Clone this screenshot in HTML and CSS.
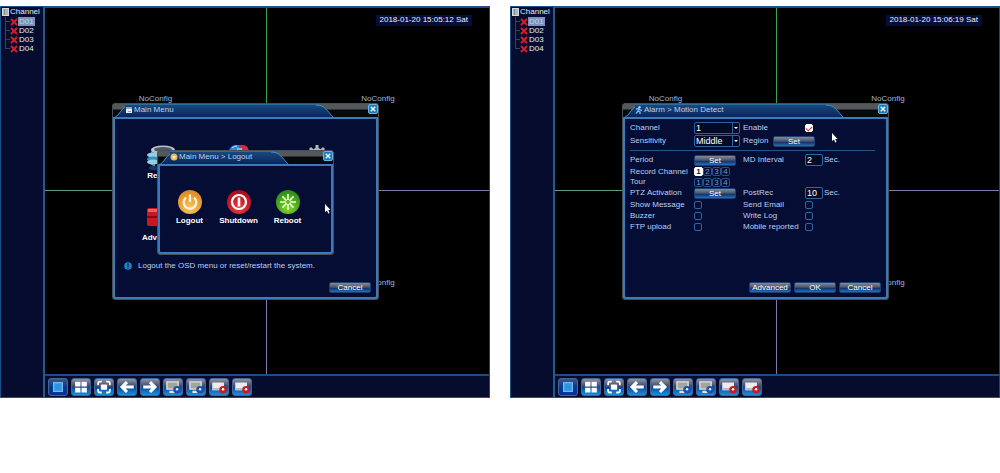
FILE: index.html
```
<!DOCTYPE html>
<html lang="en">
<head>
  <meta charset="UTF-8" />
  <meta name="viewport" content="width=device-width, initial-scale=1.0"/>
  <title>DVR - Motion Detect</title>
  <link rel="stylesheet" href="styles.css">
</head>
<body>

  <!-- shared icons -->
  <svg class="defs" width="0" height="0" aria-hidden="true">
    <defs>
      <linearGradient id="tabFill" x1="0" y1="0" x2="0" y2="1">
        <stop offset="0" stop-color="#174a80"/>
        <stop offset="1" stop-color="#0b2058"/>
      </linearGradient>
      <radialGradient id="gold" cx="50%" cy="75%" r="70%">
        <stop offset="0" stop-color="#f9c65c"/>
        <stop offset="1" stop-color="#dd8c25"/>
      </radialGradient>
      <radialGradient id="ruby" cx="50%" cy="75%" r="70%">
        <stop offset="0" stop-color="#ee3b40"/>
        <stop offset="1" stop-color="#a90c1b"/>
      </radialGradient>
      <radialGradient id="lime" cx="50%" cy="75%" r="70%">
        <stop offset="0" stop-color="#83d62c"/>
        <stop offset="1" stop-color="#2d8c19"/>
      </radialGradient>
    </defs>
    <symbol id="tabLeft" viewBox="0 0 18 14">
      <path d="M0 14C8 12 8 1 18 1V14Z" fill="url(#tabFill)"/>
      <path d="M0 14C8 12 8 1 18 1" fill="none" stroke="#3d93c4"/>
    </symbol>
    <symbol id="tabRight" viewBox="0 0 18 14">
      <path d="M0 1C9 1 10 6 18 14H0Z" fill="url(#tabFill)"/>
      <path d="M0 1C9 1 10 6 18 14" fill="none" stroke="#3d93c4"/>
    </symbol>
    <symbol id="cross" viewBox="0 0 8 8">
      <path d="M1 1L7 7M7 1L1 7" fill="none" stroke="currentColor" stroke-width="1.8"/>
    </symbol>
    <symbol id="list" viewBox="0 0 7 8">
      <path d="M0 0H7V8H0Z" fill="#d5d8dc"/>
      <path d="M1 2H6M1 4H6M1 6H6M2.500 1V7" stroke="#7d8289" stroke-width=".8"/>
    </symbol>
    <symbol id="menu" viewBox="0 0 8 8">
      <path d="M1 1H7V7H1Z" fill="#e6edf2"/>
      <path d="M1 1H7V3H1Z" fill="#8fa8bd"/>
      <path d="M3 5H6V6H3Z" fill="#c39a3d"/>
    </symbol>
    <symbol id="runner" viewBox="0 0 8 8">
      <circle cx="4.500" cy="1.300" r="1.200" fill="#a8d2f5"/>
      <path d="M1 3L4 2.500L5 4L7 4.500M4 3L3 5L5 6L5 8M3 5L1 7.500" fill="none" stroke="#78b4ee" stroke-width="1.300"/>
    </symbol>
    <symbol id="pointer" viewBox="0 0 7 10">
      <path d="M1 0V8L3 6.500L4.200 9.500L5.500 9L4.300 6H6.500Z" fill="#fff"/>
    </symbol>
    <symbol id="single" viewBox="0 0 20 18">
      <rect x="5" y="4" width="10" height="10" fill="#3aa0e8" stroke="#7cc6f5"/>
      <rect x="7" y="6" width="6" height="6" fill="#2d90e0"/>
    </symbol>
    <symbol id="quad" viewBox="0 0 20 18">
      <path d="M3.500 3H9.400V8.400H3.500ZM10.600 3H16.500V8.400H10.600ZM3.500 9.600H9.400V15H3.500ZM10.600 9.600H16.500V15H10.600Z" fill="#fff"/>
    </symbol>
    <symbol id="full" viewBox="0 0 20 18">
      <rect x="6.500" y="6" width="7" height="6" rx="1" fill="#fff"/>
      <path d="M3.500 7V5Q3.500 3 5.500 3H7.500M12.500 3H14.500Q16.500 3 16.500 5V7M16.500 11V13Q16.500 15 14.500 15H12.500M7.500 15H5.500Q3.500 15 3.500 13V11" fill="none" stroke="#fff" stroke-width="2"/>
    </symbol>
    <symbol id="prev" viewBox="0 0 20 18">
      <path d="M17.500 9H5M10 3.500L4.500 9L10 14.500" fill="none" stroke="#fff" stroke-width="3.400"/>
    </symbol>
    <symbol id="next" viewBox="0 0 20 18">
      <path d="M2.500 9H15M10 3.500L15.500 9L10 14.500" fill="none" stroke="#fff" stroke-width="3.400"/>
    </symbol>
    <symbol id="monitor" viewBox="0 0 20 18">
      <path d="M2.500 2.500H16.500V12H2.500ZM6 13H13V15.500H6Z" fill="#e4e4dc"/>
      <path d="M4 4H15V10.500H4Z" fill="#a3a69b"/>
      <circle cx="14.500" cy="12" r="4.200" fill="#1b4fae"/>
      <circle cx="14.500" cy="11.500" r="1.400" fill="#dcecff"/>
    </symbol>
    <symbol id="record" viewBox="0 0 20 18">
      <path d="M2.500 4H15.500V12.500H2.500Z" fill="#ececef"/>
      <path d="M2.500 10H15.500V12.500H2.500Z" fill="#b9bcc8"/>
      <circle cx="14.500" cy="12" r="4.200" fill="#c21d22"/>
      <circle cx="14.500" cy="11.500" r="1.400" fill="#fff"/>
    </symbol>
    <symbol id="power" viewBox="0 0 26 26">
      <circle cx="13" cy="13" r="12" fill="url(#gold)"/>
      <path d="M9 8.500A6.300 6.300 0 1 0 17 8.500M13 5.500V13" fill="none" stroke="#fff6df" stroke-width="2.200"/>
    </symbol>
    <symbol id="shutdown" viewBox="0 0 26 26">
      <circle cx="13" cy="13" r="12" fill="url(#ruby)"/>
      <circle cx="13" cy="13" r="7" fill="none" stroke="#fff" stroke-width="2.200"/>
      <path d="M13 8.500V17.500" stroke="#fff" stroke-width="2.600"/>
    </symbol>
    <symbol id="reboot" viewBox="0 0 26 26">
      <circle cx="13" cy="13" r="12" fill="url(#lime)"/>
      <path d="M13 5V11M13 15V21M5 13H11M15 13H21M7.400 7.400L11.600 11.600M14.400 14.400L18.600 18.600M18.600 7.400L14.400 11.600M11.600 14.400L7.400 18.600" stroke="#eaffcf" stroke-width="1.600"/>
    </symbol>
  </svg>

  <main class="screens">

    <section class="screen">
      <aside class="sidebar">
        <h2 class="sidebar-title"><svg width="7" height="8"><use href="#list"/></svg>Channel</h2>
        <ul class="tree">
          <li class="selected"><svg width="8" height="8"><use href="#cross"/></svg><span>D01</span></li>
          <li><svg width="8" height="8"><use href="#cross"/></svg><span>D02</span></li>
          <li><svg width="8" height="8"><use href="#cross"/></svg><span>D03</span></li>
          <li><svg width="8" height="8"><use href="#cross"/></svg><span>D04</span></li>
        </ul>
      </aside>
      <div class="video">
        <div class="cell">NoConfig</div>
        <div class="cell">NoConfig</div>
        <div class="cell"></div>
        <div class="cell">NoConfig</div>
      </div>
      <nav class="toolbar">
        <button class="tool active" aria-label="Single view"><svg viewBox="0 0 20 18"><use href="#single"/></svg></button>
        <button class="tool" aria-label="Quad view"><svg viewBox="0 0 20 18"><use href="#quad"/></svg></button>
        <button class="tool" aria-label="Full screen"><svg viewBox="0 0 20 18"><use href="#full"/></svg></button>
        <button class="tool" aria-label="Previous"><svg viewBox="0 0 20 18"><use href="#prev"/></svg></button>
        <button class="tool" aria-label="Next"><svg viewBox="0 0 20 18"><use href="#next"/></svg></button>
        <button class="tool" aria-label="Display"><svg viewBox="0 0 20 18"><use href="#monitor"/></svg></button>
        <button class="tool" aria-label="Output"><svg viewBox="0 0 20 18"><use href="#monitor"/></svg></button>
        <button class="tool" aria-label="Record"><svg viewBox="0 0 20 18"><use href="#record"/></svg></button>
        <button class="tool" aria-label="Playback"><svg viewBox="0 0 20 18"><use href="#record"/></svg></button>
      </nav>
      <time class="clock">2018-01-20 15:05:12 Sat</time>

      <div class="dialog dialog-main">
        <header class="titlebar">
          <svg width="18" height="14"><use href="#tabLeft"/></svg>
          <h3 class="tab"><svg width="8" height="8"><use href="#menu"/></svg>Main Menu</h3>
          <svg width="18" height="14"><use href="#tabRight"/></svg>
          <button class="close" aria-label="Close"><svg width="6" height="6"><use href="#cross"/></svg></button>
        </header>
        <div class="dialog-body">
          <div class="menu-grid">
            <div class="menu-item">
              <svg width="30" height="26" viewBox="0 0 30 26">
                <ellipse cx="17" cy="5" rx="12" ry="4.500" fill="#b9c3c9"/>
                <ellipse cx="17" cy="4.500" rx="9" ry="2.500" fill="#4c5963"/>
                <path d="M5 6L9 9V22L4 19Z" fill="#6f8591"/>
                <ellipse cx="7" cy="10" rx="6" ry="2.500" fill="#8fd0e6"/>
                <ellipse cx="7" cy="14" rx="6" ry="2.500" fill="#3e8fb4"/>
                <ellipse cx="7" cy="17" rx="6" ry="2.500" fill="#8fd0e6"/>
                <ellipse cx="8" cy="23" rx="5" ry="2" fill="#123a5c"/>
              </svg>
              Record
            </div>
            <div class="menu-item">
              <svg width="30" height="26" viewBox="0 0 30 26">
                <path d="M5 6Q6 1 11 0H15V8H5Z" fill="#2789ea"/>
                <path d="M15 0H20Q24 1 25 6V8H15Z" fill="#df2930"/>
                <path d="M8 3Q10 1 13 1" fill="none" stroke="#b8e3ff"/>
                <path d="M13 3H18V6H13Z" fill="#7cb9f2"/>
              </svg>
            </div>
            <div class="menu-item">
              <svg width="30" height="26" viewBox="0 0 30 26">
                <circle cx="15" cy="10" r="7" fill="#b3b8c0"/>
                <path d="M15 0V20M5 10H25M8 3L22 17M22 3L8 17" stroke="#b3b8c0" stroke-width="3"/>
                <circle cx="15" cy="10" r="3" fill="#050d35"/>
              </svg>
            </div>
            <div class="menu-item">
              <svg width="30" height="26" viewBox="0 0 30 26">
                <rect x="1" y="1" width="20" height="18" rx="2" fill="#cf1620"/>
                <path d="M2 2H20V5H2Z" fill="#f25c5c"/>
                <path d="M1 10H21" stroke="#7c0a14" stroke-width="2"/>
              </svg>
              Advanced
            </div>
          </div>
          <p class="hint">
            <svg width="8" height="8" viewBox="0 0 8 8"><circle cx="4" cy="4" r="3.800" fill="#1b86c8"/><path d="M4 1.500V5M4 5.700V6.800" stroke="#062048" stroke-width="1.300"/></svg>
            Logout the OSD menu or reset/restart the system.
          </p>
          <footer class="actions">
            <button class="btn">Cancel</button>
          </footer>
        </div>
      </div>

      <div class="dialog dialog-logout">
        <header class="titlebar">
          <svg width="18" height="14"><use href="#tabLeft"/></svg>
          <h3 class="tab"><svg width="8" height="8" viewBox="0 0 8 8"><circle cx="4" cy="4" r="3.500" fill="#f2b64c"/><circle cx="4" cy="4" r="1.500" fill="#fff0c4"/></svg>Main Menu &gt; Logout</h3>
          <svg width="18" height="14"><use href="#tabRight"/></svg>
          <button class="close" aria-label="Close"><svg width="6" height="6"><use href="#cross"/></svg></button>
        </header>
        <div class="dialog-body power-list">
          <button class="power-item"><svg width="26" height="26"><use href="#power"/></svg>Logout</button>
          <button class="power-item"><svg width="26" height="26"><use href="#shutdown"/></svg>Shutdown</button>
          <button class="power-item"><svg width="26" height="26"><use href="#reboot"/></svg>Reboot</button>
        </div>
      </div>
      <svg class="pointer pointer-logout" width="7" height="10"><use href="#pointer"/></svg>
    </section>

    <section class="screen">
      <aside class="sidebar">
        <h2 class="sidebar-title"><svg width="7" height="8"><use href="#list"/></svg>Channel</h2>
        <ul class="tree">
          <li class="selected"><svg width="8" height="8"><use href="#cross"/></svg><span>D01</span></li>
          <li><svg width="8" height="8"><use href="#cross"/></svg><span>D02</span></li>
          <li><svg width="8" height="8"><use href="#cross"/></svg><span>D03</span></li>
          <li><svg width="8" height="8"><use href="#cross"/></svg><span>D04</span></li>
        </ul>
      </aside>
      <div class="video">
        <div class="cell">NoConfig</div>
        <div class="cell">NoConfig</div>
        <div class="cell"></div>
        <div class="cell">NoConfig</div>
      </div>
      <nav class="toolbar">
        <button class="tool active" aria-label="Single view"><svg viewBox="0 0 20 18"><use href="#single"/></svg></button>
        <button class="tool" aria-label="Quad view"><svg viewBox="0 0 20 18"><use href="#quad"/></svg></button>
        <button class="tool" aria-label="Full screen"><svg viewBox="0 0 20 18"><use href="#full"/></svg></button>
        <button class="tool" aria-label="Previous"><svg viewBox="0 0 20 18"><use href="#prev"/></svg></button>
        <button class="tool" aria-label="Next"><svg viewBox="0 0 20 18"><use href="#next"/></svg></button>
        <button class="tool" aria-label="Display"><svg viewBox="0 0 20 18"><use href="#monitor"/></svg></button>
        <button class="tool" aria-label="Output"><svg viewBox="0 0 20 18"><use href="#monitor"/></svg></button>
        <button class="tool" aria-label="Record"><svg viewBox="0 0 20 18"><use href="#record"/></svg></button>
        <button class="tool" aria-label="Playback"><svg viewBox="0 0 20 18"><use href="#record"/></svg></button>
      </nav>
      <time class="clock">2018-01-20 15:06:19 Sat</time>

      <div class="dialog dialog-main">
        <header class="titlebar">
          <svg width="18" height="14"><use href="#tabLeft"/></svg>
          <h3 class="tab"><svg width="8" height="8"><use href="#runner"/></svg>Alarm &gt; Motion Detect</h3>
          <svg width="18" height="14"><use href="#tabRight"/></svg>
          <button class="close" aria-label="Close"><svg width="6" height="6"><use href="#cross"/></svg></button>
        </header>
        <form class="dialog-body motion-form">
          <div class="fields">
            <label for="channel">Channel</label>
            <span class="select"><select id="channel"><option>1</option><option>2</option><option>3</option><option>4</option></select></span>
            <label for="enable">Enable</label>
            <input type="checkbox" id="enable" checked>

            <label for="sensitivity">Sensitivity</label>
            <span class="select"><select id="sensitivity"><option>Middle</option><option>Low</option><option>High</option></select></span>
            <div class="region"><span>Region</span><button type="button" class="btn">Set</button></div>
          </div>

          <hr>

          <div class="fields detail">
            <span>Period</span>
            <button type="button" class="btn">Set</button>
            <label for="interval">MD Interval</label>
            <span class="seconds"><input type="text" id="interval" value="2">Sec.</span>

            <span>Record Channel</span>
            <div class="numbers"><button type="button" class="on">1</button><button type="button">2</button><button type="button">3</button><button type="button">4</button></div>

            <span>Tour</span>
            <div class="numbers"><button type="button">1</button><button type="button">2</button><button type="button">3</button><button type="button">4</button></div>

            <span>PTZ Activation</span>
            <button type="button" class="btn">Set</button>
            <label for="postrec">PostRec</label>
            <span class="seconds"><input type="text" id="postrec" value="10">Sec.</span>

            <label for="message">Show Message</label>
            <input type="checkbox" id="message">
            <label for="email">Send Email</label>
            <input type="checkbox" id="email">

            <label for="buzzer">Buzzer</label>
            <input type="checkbox" id="buzzer">
            <label for="log">Write Log</label>
            <input type="checkbox" id="log">

            <label for="ftp">FTP upload</label>
            <input type="checkbox" id="ftp">
            <label for="mobile">Mobile reported</label>
            <input type="checkbox" id="mobile">
          </div>

          <footer class="actions">
            <button type="button" class="btn">Advanced</button>
            <button type="button" class="btn">OK</button>
            <button type="button" class="btn">Cancel</button>
          </footer>
        </form>
      </div>
      <svg class="pointer pointer-motion" width="7" height="10"><use href="#pointer"/></svg>
    </section>

  </main>

</body>
</html>
```
FILE: styles.css
```
* {
  box-sizing: border-box;
}

body {
  margin: 0;
  background: white;
  font-family: "Liberation Sans", Arial, sans-serif;
  font-size: 8px;
  line-height: 10px;
  color: #b9d0f2;
}

svg {
  display: block;
  flex: none;
}

h2, h3, p, ul {
  margin: 0;
  padding: 0;
  font-size: 8px;
  font-weight: normal;
}

button, input, select {
  font: inherit;
  color: inherit;
  margin: 0;
  padding: 0;
}

.defs {
  position: absolute;
}

.screens {
  display: grid;
  grid-template-columns: 1fr 1fr;
  gap: 20px;
  padding-top: 6px;
}

.screen {
  position: relative;
  display: grid;
  grid-template-columns: 44px 1fr;
  grid-template-rows: 1fr auto;
  background: #050c2e;
  border: 1px solid #1d5288;
  border-right-color: #2c4068;
}

/* channel list */
.sidebar {
  grid-row: 1 / 3;
  padding: 0 1px;
  border-right: 2px solid #235c8c;
  color: #e4ecf8;
}

.sidebar-title {
  display: flex;
  align-items: center;
  gap: 1px;
}

.tree {
  list-style: none;
  padding-left: 3px;
}

.tree li {
  display: flex;
  align-items: center;
  height: 9px;
  background: linear-gradient(#33425f, #33425f) left top / 1px 100% no-repeat;
}

.tree li:last-child {
  background-size: 1px 5px;
}

.tree li::before {
  content: "";
  width: 5px;
  border-top: 1px solid #33425f;
}

.tree svg {
  color: #e01b24;
}

.tree span {
  padding: 0 1px;
  line-height: 9px;
}

.tree .selected span {
  background: #7f8fc0;
  color: #a0e8ac;
}

/* camera views */
.video {
  display: grid;
  grid-template-columns: 1fr 1fr;
  grid-auto-rows: 183px;
  background: black;
  border-top: 1px solid #1d5c35;
}

.cell {
  display: flex;
  align-items: center;
  justify-content: center;
  color: #9fb5d6;
}

.cell:nth-child(1) {
  border-right: 1px solid #36a84a;
  border-bottom: 1px solid #5c9f78;
}

.cell:nth-child(2) {
  border-bottom: 1px solid #8674b0;
}

.cell:nth-child(3) {
  border-right: 1px solid #8674b0;
}

.clock {
  position: absolute;
  top: 8px;
  right: 17px;
  padding: 0 4px 1px 3px;
  background: #060d38;
  color: #eef2fa;
}

.toolbar {
  display: flex;
  gap: 3px;
  padding: 2px 3px 1px;
  border-top: 2px solid #1c4b80;
}

.tool {
  width: 20px;
  height: 18px;
  border: 1px solid #42669a;
  border-radius: 3px;
  background: linear-gradient(#8d94a5, #3b4a6c 45%, #0b4f9e 55%, #1890e0);
}

.tool.active {
  background: linear-gradient(#3d5584, #083a8b 50%, #04309a);
}

/* windows */
.dialog {
  position: absolute;
  display: flex;
  flex-direction: column;
  border: 1px solid #4a4f55;
  border-radius: 3px;
  background: #4a4f55;
}

.dialog-main {
  top: 96px;
  left: 111px;
  width: 267px;
  min-height: 197px;
}

.dialog-logout {
  top: 143px;
  left: 156px;
  width: 177px;
  min-height: 105px;
}

.titlebar {
  display: flex;
  height: 13px;
  overflow: hidden;
  background: linear-gradient(#55585b 5px, #08090c 6px);
}

.tab {
  flex: 1;
  display: flex;
  align-items: center;
  gap: 1px;
  margin-left: -6px;
  height: 14px;
  padding-bottom: 3px;
  border-top: 1px solid #2d6c9c;
  background: linear-gradient(#174a80, #0b2058);
  white-space: nowrap;
}

.close {
  display: grid;
  place-items: center;
  width: 10px;
  height: 10px;
  margin-left: 34px;
  border: 1px solid #63b6e6;
  border-radius: 2px;
  background: #187bbd;
  color: white;
}

.dialog-body {
  flex: 1;
  display: flex;
  flex-direction: column;
  border: 2px solid #3a7cba;
  border-radius: 1px 1px 3px 3px;
  background: #050d35;
}

.menu-grid {
  display: grid;
  grid-template-columns: repeat(3, 78px);
  row-gap: 26px;
  padding: 26px 7px 0;
}

.menu-item {
  display: flex;
  flex-direction: column;
  align-items: center;
  min-height: 36px;
  font-weight: bold;
  color: white;
}

.hint {
  display: flex;
  align-items: center;
  gap: 6px;
  padding: 18px 9px 0;
}

.actions {
  display: flex;
  justify-content: flex-end;
  gap: 3px;
  margin-top: auto;
  padding: 0 5px 4px;
}

.btn {
  width: 42px;
  height: 11px;
  line-height: 9px;
  border: 1px solid #1d3f70;
  border-radius: 2px;
  background: linear-gradient(#848a99, #4b5671 45%, #12366f 60%, #2471b8);
  color: white;
}

.power-list {
  flex-direction: row;
  align-items: flex-start;
  padding: 23px 5px 0;
}

.power-item {
  display: flex;
  flex-direction: column;
  align-items: center;
  gap: 1px;
  width: 49px;
  border: none;
  background: none;
  font-weight: bold;
  color: white;
}

.pointer {
  position: absolute;
}

.pointer-logout {
  top: 197px;
  left: 323px;
}

.pointer-motion {
  top: 126px;
  left: 320px;
}

/* motion detect */
.motion-form {
  padding: 3px 0 0;
}

.fields {
  display: grid;
  grid-template-columns: 64px 49px 62px 1fr;
  grid-auto-rows: 12px;
  row-gap: 1px;
  align-items: center;
  padding: 0 5px;
}

.fields.detail {
  grid-template-rows: 12px 11px 10px 12px;
  grid-auto-rows: 11px;
  row-gap: 0;
}

.detail .numbers {
  grid-column: 2 / 5;
}

hr {
  align-self: stretch;
  margin: 3px 11px 3px 5px;
  border: none;
  border-top: 1px solid #24558c;
}

.select {
  position: relative;
  width: 46px;
}

.select::after {
  content: "";
  position: absolute;
  top: 5px;
  right: 2px;
  border: 2px solid transparent;
  border-top-color: white;
  border-bottom: none;
}

select {
  display: block;
  appearance: none;
  width: 100%;
  height: 12px;
  padding-left: 1px;
  border: 1px solid #2b619c;
  border-radius: 2px;
  background: linear-gradient(#2b619c, #2b619c) right 6px top / 1px 100% no-repeat #030a28;
  font-size: 9px;
  color: white;
}

input[type="checkbox"] {
  appearance: none;
  width: 8px;
  height: 8px;
  border: 1px solid #2b69a5;
  border-radius: 2px;
}

input[type="checkbox"]:checked {
  display: grid;
  place-items: center;
  border-color: white;
  background: white;
}

input[type="checkbox"]:checked::after {
  content: "";
  width: 5px;
  height: 3px;
  border: solid #d3373c;
  border-width: 0 0 1px 1px;
  transform: rotate(-45deg);
}

input[type="text"] {
  width: 18px;
  height: 12px;
  padding-left: 1px;
  border: 1px solid #2b69a5;
  border-radius: 2px;
  background: #030a28;
  font-size: 9px;
  color: white;
}

.region {
  grid-column: 3 / 5;
  display: flex;
  align-items: center;
}

.region span {
  width: 30px;
}

.seconds {
  display: flex;
  align-items: center;
  gap: 1px;
}

.numbers {
  display: flex;
}

.numbers button {
  width: 9px;
  height: 9px;
  line-height: 7px;
  border: 1px solid #225287;
  border-radius: 2px;
  background: none;
  color: #6f9bd0;
}

.numbers .on {
  border-color: white;
  background: white;
  font-weight: bold;
  color: #0a1540;
}
```
